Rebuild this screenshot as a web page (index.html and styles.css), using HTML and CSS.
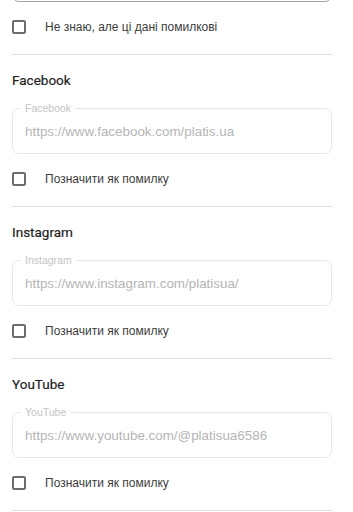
FILE: index.html
```html
<!DOCTYPE html>
<html lang="uk">
<head>
<meta charset="utf-8">
<link rel="stylesheet" href="styles.css">
</head>
<body>
<div class="wrap">
  <div class="field field--prev"></div>
  <label class="check">
    <span class="box"></span>
    <span class="check-text">Не знаю, але ці дані помилкові</span>
  </label>
  <hr class="divider">

  <section class="section">
    <h3 class="title">Facebook</h3>
    <div class="field">
      <span class="float-label">Facebook</span>
      <span class="value">https://www.facebook.com/platis.ua</span>
    </div>
    <label class="check">
      <span class="box"></span>
      <span class="check-text">Позначити як помилку</span>
    </label>
  </section>
  <hr class="divider">

  <section class="section">
    <h3 class="title">Instagram</h3>
    <div class="field">
      <span class="float-label">Instagram</span>
      <span class="value">https://www.instagram.com/platisua/</span>
    </div>
    <label class="check">
      <span class="box"></span>
      <span class="check-text">Позначити як помилку</span>
    </label>
  </section>
  <hr class="divider">

  <section class="section">
    <h3 class="title">YouTube</h3>
    <div class="field">
      <span class="float-label">YouTube</span>
      <span class="value">https://www.youtube.com/@platisua6586</span>
    </div>
    <label class="check">
      <span class="box"></span>
      <span class="check-text">Позначити як помилку</span>
    </label>
  </section>
  <hr class="divider">
</div>
</body>
</html>
```
FILE: styles.css
```css
html, body {
  margin: 0;
  padding: 0;
  background: #ffffff;
}
.wrap {
  padding: 0 21px 0 12px;
  font-family: "Liberation Sans", Arial, sans-serif;
}
.field {
  position: relative;
  box-sizing: border-box;
  height: 46px;
  margin-top: 19px;
  border: 1px solid #e6e6e6;
  border-radius: 7px;
  display: flex;
  align-items: center;
  padding-left: 12px;
}
.field--prev {
  margin-top: -44px;
  border-color: #a3a3a3;
}
.float-label {
  position: absolute;
  left: 8px;
  top: -7px;
  padding: 0 4px;
  background: #ffffff;
  font-size: 10.5px;
  line-height: 12px;
  color: #c4c4c4;
}
.value {
  font-size: 13.4px;
  color: #b5b5b5;
  white-space: nowrap;
}
.check {
  display: flex;
  align-items: center;
  height: 20px;
  margin-top: 15px;
}
.box {
  box-sizing: border-box;
  width: 14px;
  height: 14px;
  border: 2px solid #6b6e73;
  border-radius: 2px;
  flex: none;
}
.check-text {
  margin-left: 19px;
  font-size: 12px;
  color: #3c3c3c;
}
.divider {
  margin: 17px 0 0;
  border: 0;
  border-top: 1px solid #dfdfdf;
  height: 0;
}
.section {
  padding-top: 16px;
}
.title {
  margin: 0;
  font-family: Roboto, "Noto Sans", sans-serif;
  font-weight: 400;
  font-size: 13.5px;
  line-height: 18px;
  color: #1f1f1f;
  -webkit-text-stroke: 0.2px #1f1f1f;
}
```
